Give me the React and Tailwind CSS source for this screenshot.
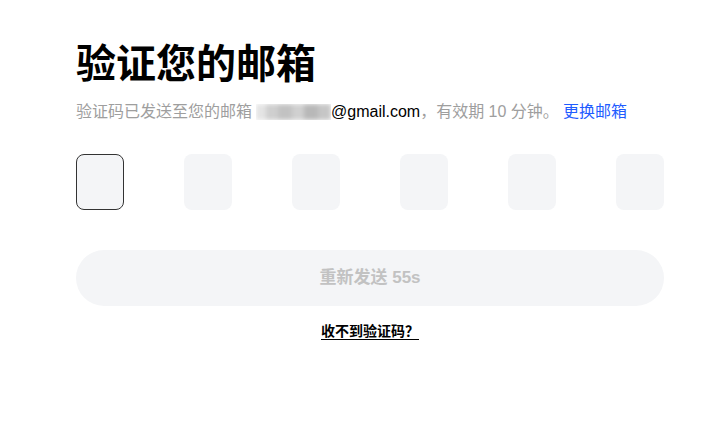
import React from "react";

const cjk = { fontFamily: '"Liberation Sans", "Noto Sans CJK SC", sans-serif' };

export default function App() {
  return (
    <div className="w-[726px] h-[434px] bg-white" style={cjk}>
      <div className="pl-[76px] pr-[62px] pt-[38px]">
        <h1 className="text-[40px] leading-[52px] font-bold text-black">验证您的邮箱</h1>
        <p className="mt-[11px] text-[16px] leading-[22px] text-[#9e9e9e] flex items-center whitespace-nowrap">
          <span>验证码已发送至您的邮箱</span>
          <span className="relative inline-block w-[75px] h-[16px] ml-[4px] overflow-hidden">
            <span className="absolute inset-0 flex blur-[2px]">
              <span className="w-[10px] bg-[#e4e4e4]" />
              <span className="w-[12px] bg-[#cfcfcf]" />
              <span className="w-[14px] bg-[#c2c2c2]" />
              <span className="w-[12px] bg-[#d0d0d0]" />
              <span className="w-[14px] bg-[#b8b8b8]" />
              <span className="w-[13px] bg-[#c6c6c6]" />
            </span>
          </span>
          <span className="text-black">@gmail.com</span>
          <span>，有效期 10 分钟。</span>
          <a className="text-[#1f5cff] ml-[4px]">更换邮箱</a>
        </p>
        <div className="mt-[31px] flex justify-between">
          <div className="w-[48px] h-[56px] rounded-[8px] bg-[#f4f5f7] border border-[#333]" />
          <div className="w-[48px] h-[56px] rounded-[8px] bg-[#f4f5f7]" />
          <div className="w-[48px] h-[56px] rounded-[8px] bg-[#f4f5f7]" />
          <div className="w-[48px] h-[56px] rounded-[8px] bg-[#f4f5f7]" />
          <div className="w-[48px] h-[56px] rounded-[8px] bg-[#f4f5f7]" />
          <div className="w-[48px] h-[56px] rounded-[8px] bg-[#f4f5f7]" />
        </div>
        <button className="mt-[40px] w-full h-[56px] rounded-full bg-[#f4f5f7] text-[#c2c2c2] text-[17px] font-bold flex items-center justify-center">
          重新发送 55s
        </button>
        <div className="mt-[16px] flex justify-center">
          <a className="text-[14px] leading-[18px] font-bold text-black underline underline-offset-[3px]">收不到验证码？</a>
        </div>
      </div>
    </div>
  );
}
